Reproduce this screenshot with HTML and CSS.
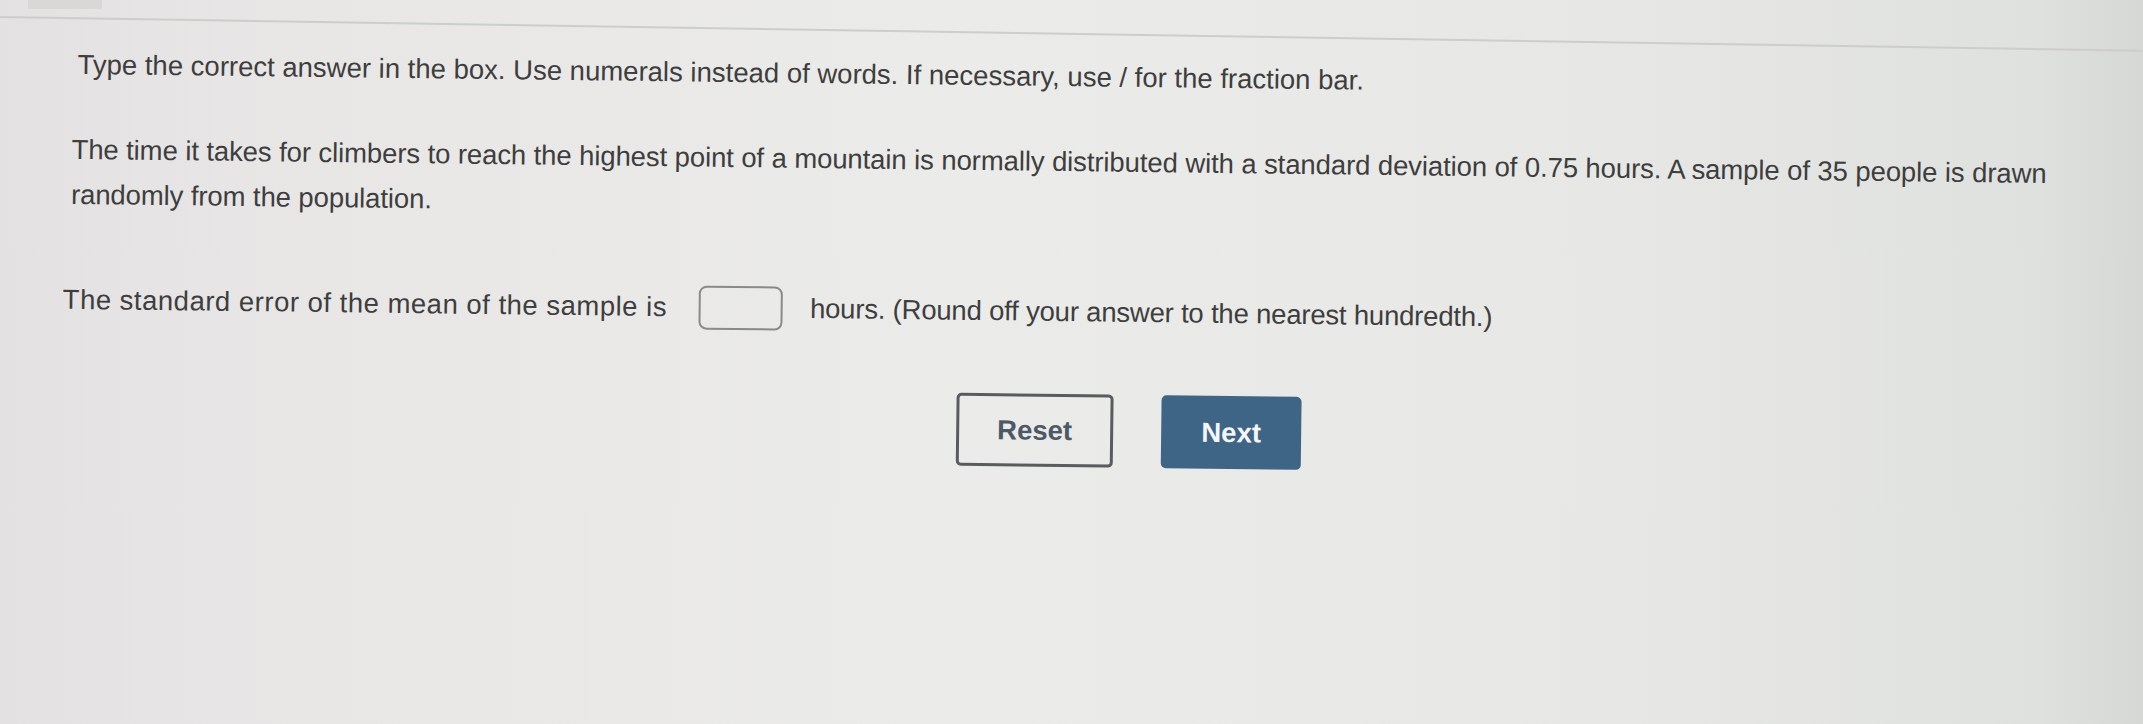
FILE: index.html
```html
<!DOCTYPE html>
<html lang="en">
<head>
<meta charset="utf-8">
<title>Question</title>
<link rel="stylesheet" href="styles.css">
</head>
<body>
<div class="page">
  <header class="top">
    <div class="tab"></div>
    <div class="rule"></div>
  </header>
  <main class="question">
    <p class="instr">Type the correct answer in the box. Use numerals instead of words. If necessary, use / for the fraction bar.</p>
    <p class="stem">The time it takes for climbers to reach the highest point of a mountain is normally distributed with a standard deviation of 0.75 hours. A sample of 35 people is drawn randomly from the population.</p>
    <div class="answer">
      <span class="lead">The standard error of the mean of the sample is</span>
      <input class="box" type="text" aria-label="answer">
      <span class="tail">hours. (Round off your answer to the nearest hundredth.)</span>
    </div>
    <div class="actions">
      <button class="btn reset" type="button">Reset</button>
      <button class="btn next" type="button">Next</button>
    </div>
  </main>
</div>
</body>
</html>
```
FILE: styles.css
```css
html, body {
  margin: 0;
  padding: 0;
  height: 100%;
}
body {
  background: linear-gradient(90deg, #e4e1e2 0%, #e8e7e6 15%, #ebebe9 45%, #e7e8e5 75%, #dfe1de 95%, #d6d8d5 100%);
  font-family: "Liberation Sans", Arial, Helvetica, sans-serif;
  color: #3e3e3e;
  overflow: hidden;
}
.page {
  width: 2143px;
  height: 724px;
}
.top {
  height: 30px;
}
.tab {
  margin-left: 28px;
  width: 74px;
  height: 9px;
  background: #d8d8d7;
}
.rule {
  margin-top: 7px;
  height: 2px;
  background: #cdcdcb;
  transform-origin: 0 0;
  transform: rotate(0.9deg);
}
.question {
  padding: 18px 0 0 78px;
  transform-origin: 0 0;
  transform: rotate(0.7deg);
}
.instr {
  margin: 0;
  font-size: 27.5px;
  line-height: 32px;
}
.stem {
  margin: 46px 0 0 -5px;
  font-size: 27.5px;
  line-height: 45px;
  letter-spacing: -0.1px;
  width: 2060px;
}
.answer {
  margin: 60px 0 0 -12px;
  display: flex;
  align-items: center;
  font-size: 27.5px;
  line-height: 32px;
}
.lead {
  letter-spacing: 0.5px;
}
.tail {
  letter-spacing: -0.2px;
}
.box {
  width: 84px;
  height: 44px;
  box-sizing: border-box;
  margin: 1px 27px 0 32px;
  border: 2px solid #8a8a8a;
  border-radius: 8px;
  background: transparent;
}
.actions {
  margin: 60px 0 0 883px;
  display: flex;
  gap: 48px;
}
.btn {
  font-family: "Liberation Sans", Arial, Helvetica, sans-serif;
  font-weight: bold;
  font-size: 27.5px;
  height: 73px;
  border-radius: 5px;
  cursor: pointer;
}
.reset {
  width: 157px;
  background: transparent;
  border: 3px solid #585c60;
  color: #4d5a66;
}
.next {
  width: 140px;
  background: #3f6586;
  border: none;
  color: #f4f6f8;
}
```
